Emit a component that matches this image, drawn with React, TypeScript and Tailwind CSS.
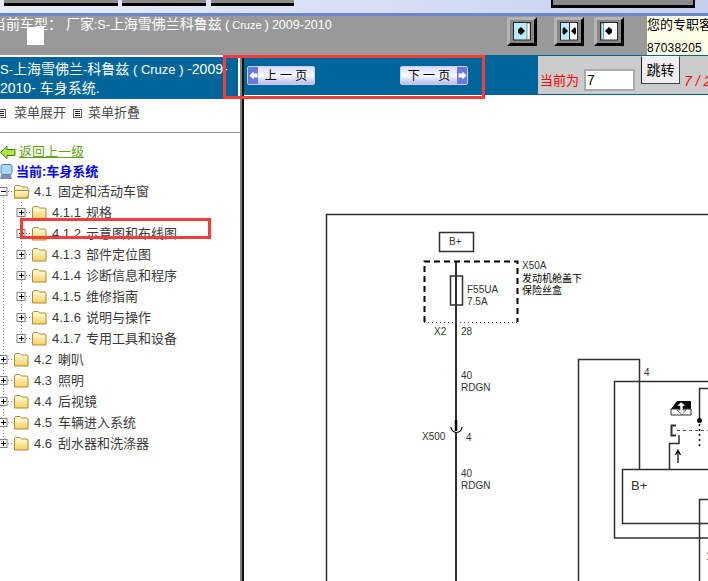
import { useId } from 'react';

const FONT = "font-['Liberation_Sans','Noto_Sans_CJK_SC',sans-serif]";

const childRows = [
  { num: '4.1.1', label: '规格' },
  { num: '4.1.2', label: '示意图和布线图' },
  { num: '4.1.3', label: '部件定位图' },
  { num: '4.1.4', label: '诊断信息和程序' },
  { num: '4.1.5', label: '维修指南' },
  { num: '4.1.6', label: '说明与操作' },
  { num: '4.1.7', label: '专用工具和设备' },
];

const topRows = [
  { num: '4.2', label: '喇叭' },
  { num: '4.3', label: '照明' },
  { num: '4.4', label: '后视镜' },
  { num: '4.5', label: '车辆进入系统' },
  { num: '4.6', label: '刮水器和洗涤器' },
];

function Folder({ x, open }: { x: number; open?: boolean }) {
  const id = useId();
  return (
    <g transform={`translate(${x} 0)`}>
      <defs>
        <linearGradient id={id} x1="0" y1="0" x2="0" y2="1">
          <stop offset="0" stopColor="#fffde0" />
          <stop offset="1" stopColor="#f8d060" />
        </linearGradient>
      </defs>
      <path d="M0.5 6 L1.5 4.5 H6 L7.5 6 H13 L14 7 V17 H0.5 Z" fill={`url(#${id})`} stroke="#b08a35" strokeWidth="1" />
      {open ? (
        <path d="M0.5 9.5 H10 L15 9.5 L13.5 17 H0.5 Z" fill={`url(#${id})`} stroke="#b08a35" strokeWidth="1" />
      ) : (
        <path d="M1.5 8.5 H13" stroke="#fff6c0" strokeWidth="1" />
      )}
    </g>
  );
}

function Expander({ x, minus }: { x: number; minus?: boolean }) {
  return (
    <g>
      <rect x={x} y="6.5" width="8" height="8" fill="#fff" stroke="#808080" />
      <path d={`M${x + 2} 10.5 H${x + 7}`} stroke="#000" />
      {!minus && <path d={`M${x + 4.5} 8 V13`} stroke="#000" />}
    </g>
  );
}

const Dots = ({ d }: { d: string }) => (
  <path d={d} stroke="#888" strokeWidth="1" strokeDasharray="1 2" fill="none" />
);

function TreeRow({ num, label, child, open }: { num: string; label: string; child?: boolean; open?: boolean }) {
  return (
    <div className="flex h-[21px] items-center text-[13px] text-[#3a3a3a]">
      {child ? (
        <svg width="52" height="21" className="shrink-0">
          <Dots d="M3.5 0 V21" />
          <Dots d={num === '4.1.7' ? 'M21.5 0 V10' : 'M21.5 0 V21'} />
          <Dots d="M26 10.5 H32" />
          <Expander x={17} />
          <Folder x={32} />
        </svg>
      ) : (
        <svg width="34" height="21" className="shrink-0">
          <Dots d={num === '4.6' ? 'M3.5 0 V10' : open ? 'M3.5 10 V21' : 'M3.5 0 V21'} />
          <Dots d="M8 10.5 H14" />
          <Expander x={-1} minus={open} />
          <Folder x={14} open={open} />
        </svg>
      )}
      <span className="whitespace-pre">{num}</span>
      <span className={child ? 'ml-[5px]' : 'ml-[6px]'}>{label}</span>
    </div>
  );
}

function PageButton({ dir, label }: { dir: 'prev' | 'next'; label: string }) {
  const arrow = (
    <span className="flex h-full w-[10px] items-center justify-center bg-[#6a78dc]">
      <svg width="9" height="9" viewBox="0 0 9 9">
        <path d={dir === 'prev' ? 'M0.5 4.5 L4.5 0.5 V2.5 H8.5 V6.5 H4.5 V8.5 Z' : 'M8.5 4.5 L4.5 0.5 V2.5 H0.5 V6.5 H4.5 V8.5 Z'} fill="#fff" />
      </svg>
    </span>
  );
  return (
    <div className="flex h-[19px] w-[68px] items-center overflow-hidden rounded-[2px] border border-[#c8d0f4] bg-gradient-to-b from-[#d8dcfa] via-[#fafaff] to-[#b6bcee] text-[12px] text-black">
      {dir === 'prev' && arrow}
      <span className="flex-1 text-center whitespace-pre">{label}</span>
      {dir === 'next' && arrow}
    </div>
  );
}

function SplitIcon({ kind }: { kind: 'left' | 'both' | 'right' }) {
  const fill = kind === 'left' ? '#b6ecfb' : '#fff';
  return (
    <svg width="30" height="29" viewBox="0 0 30 29" className="shrink-0">
      <rect width="30" height="29" fill="#000" />
      <path d="M0 0 H30 L27 3 H3 V26 L0 29 Z" fill="#b4b4b4" />
      <rect x="3" y="3" width="24" height="23" fill="#878787" />
      <rect x="6.5" y="5.5" width="17" height="17.5" fill={fill} stroke="#2a2a2a" />
      {kind === 'both' && <rect x="7" y="6" width="8" height="16.5" fill="#b6ecfb" />}
      {kind === 'left' && <rect x="20" y="6" width="3" height="16.5" fill="#fff" stroke="#2a2a2a" strokeWidth="0.5" />}
      {kind === 'right' && <rect x="7" y="6" width="2.5" height="16.5" fill="#b6ecfb" stroke="#2a2a2a" strokeWidth="0.5" />}
      {kind === 'both' && <path d="M15.5 5.5 V23" stroke="#2a2a2a" />}
      {kind === 'left' && <path d="M18 14 L14 10 L11 12.5 V15.5 L14 18 Z" fill="#000" />}
      {kind === 'both' && <path d="M14 14 L10 10 L8.5 12 V16 L10 18 Z" fill="#000" />}
      {kind === 'both' && <path d="M17 14 L21 10 L22 12 V16 L21 18 Z" fill="#000" />}
      {kind === 'right' && <path d="M11 14 L15 10 L18 12.5 V15.5 L15 18 Z" fill="#000" />}
    </svg>
  );
}

function MenuGlyph() {
  return (
    <svg width="9" height="9" viewBox="0 0 9 9" className="shrink-0">
      <rect x="0.5" y="0.5" width="8" height="8" fill="#fff" stroke="#666" />
      <path d="M2 2.5 H7 M2 4.5 H7 M2 6.5 H7" stroke="#222" />
    </svg>
  );
}

function WiringDiagram() {
  const line = '#2f2f2f';
  const text = 'fill-[#333] text-[10px]';
  return (
    <svg width="464" height="486" viewBox="244 95 464 486" className="block">
      <g fill="none" stroke={line} strokeWidth="1.5">
        <path d="M326.5 581 V214.5 H708" />
        <rect x="439.5" y="232.5" width="34" height="19" />
        <rect x="450.5" y="276" width="12" height="29" />
        <path d="M578.5 581 V359.5 H639.5 V469" strokeWidth="1.5" />
        <path d="M708 381.5 H614.5 V538 H708" />
        <path d="M708 469.5 H622.5 V523.5 H708" />
        <path d="M708 388.5 H699.5 V421" />
        <path d="M708 499.5 H699.5 V581" />
        <path d="M669.5 469 V443.5 H679 V435" />
        <path d="M676 425.5 H671.5 V435.5 H676" strokeWidth="2" />
      </g>
      <path d="M456 261 V420 M456 432 V581" stroke={line} strokeWidth="2" fill="none" />
      <path d="M456 420 V431" stroke="#000" strokeWidth="2.5" />
      <path d="M451 427 A5.5 5.5 0 0 0 462 427" stroke="#000" strokeWidth="1.2" fill="none" />
      <path d="M424.5 322 V261.5 H517.5 V322" stroke="#000" strokeWidth="2" strokeDasharray="6 4" fill="none" />
      <path d="M424 322.5 H518" stroke="#555" strokeWidth="1" strokeDasharray="1 3" fill="none" />
      <path d="M677 430.5 H708" stroke="#555" strokeWidth="1" strokeDasharray="3 3" fill="none" />
      <path d="M699.5 424 V448" stroke="#000" strokeWidth="1.5" strokeDasharray="2 3" fill="none" />
      <circle cx="699.5" cy="420.5" r="2.5" fill="#000" />
      <path d="M678 463 V451 M675.5 455 L678 450 L680.5 455" stroke="#000" strokeWidth="1.2" fill="none" />
      <path d="M671 409 L677 401 H691 V409 Z" fill="#000" />
      <path d="M671 409 H691 V415 H671 Z" fill="#fff" stroke="#333" />
      <path d="M681 402 L677 406 H680 V410 L677 410 L682 415 L686 410 H683 V406 H686 Z" fill="#fff" stroke="#000" strokeWidth="0.5" />
      <g>
        <text x="449" y="245" className={text}>B+</text>
        <text x="467" y="293" className={text}>F55UA</text>
        <text x="467" y="305" className={text}>7.5A</text>
        <text x="522" y="269" className={text}>X50A</text>
        <text x="522" y="282" className="fill-black text-[10px]">发动机舱盖下</text>
        <text x="522" y="294" className="fill-black text-[10px]">保险丝盒</text>
        <text x="434" y="335" className={text}>X2</text>
        <text x="461" y="335" className={text}>28</text>
        <text x="461" y="379" className={text}>40</text>
        <text x="461" y="391" className={text}>RDGN</text>
        <text x="422" y="440" className={text}>X500</text>
        <text x="466" y="441" className={text}>4</text>
        <text x="461" y="477" className={text}>40</text>
        <text x="461" y="489" className={text}>RDGN</text>
        <text x="644" y="376" className={text}>4</text>
        <text x="631" y="490" className="fill-[#333] text-[13px]">B+</text>
        <text x="706" y="560" className={text}>1</text>
      </g>
    </svg>
  );
}

export default function App() {
  return (
    <div className={`relative h-[581px] w-[708px] overflow-hidden bg-white ${FONT}`}>
      {/* cut off toolbar buttons along the top */}
      <div className="flex h-[13px] bg-gradient-to-r from-[#e8ecf8] via-[#d8e0f6] to-[#c4d0f0]">
        <div className="ml-[4px] h-[6px] w-[114px] border-b-[3px] border-black bg-[#8a8a8a]" />
        <div className="ml-[4px] h-[6px] w-[84px] border-b-[3px] border-black bg-[#8a8a8a]" />
        <div className="ml-[5px] h-[6px] w-[83px] border-b-[3px] border-black bg-[#8a8a8a]" />
        <div className="ml-[257px] h-[8px] w-[144px] border-x-[2px] border-b-[3px] border-black bg-[#8a8a8a]" />
      </div>
      <div className="h-[3px] bg-[#6c86cc]" />

      <div className="flex h-[39px] bg-[#999999]">
        <div className="w-[507px] overflow-hidden">
          <div className="-ml-[8px] text-[14px] leading-[16px] whitespace-pre text-white">
            当前车型： 厂家<span className="text-[12.5px]">:S-</span>上海雪佛兰科鲁兹
            <span className="ml-[3px] text-[13px]">(</span>
            <span className="ml-[3px] text-[11px]">Cruze</span>
            <span className="ml-[3px] text-[13px]">)</span>
            <span className="ml-[3px] text-[12.5px]">2009-2010</span>
          </div>
        </div>
        <div className="flex w-[140px] items-start pt-[1px]">
          <SplitIcon kind="left" />
          <div className="ml-[17px]">
            <SplitIcon kind="both" />
          </div>
          <div className="ml-[10px]">
            <SplitIcon kind="right" />
          </div>
        </div>
        <div className="flex flex-1 flex-col justify-between overflow-hidden bg-[#ffffe8] pt-px text-black">
          <div className="text-[13px] leading-[16px] whitespace-nowrap">您的专职客</div>
          <div className="text-[12px] leading-[14px] tracking-[0.2px]">87038205</div>
        </div>
      </div>

      <div className="flex h-[526px]">
        <aside className="w-[240px] shrink-0 overflow-hidden pt-[2px]">
          <div className="h-[42px] w-[238px] bg-[#006699] pt-[3px] text-[14px] leading-[18px] text-white">
            <div className="whitespace-pre">
              <span className="text-[13px]">S-</span>上海雪佛兰<span className="text-[13px]">-</span>科鲁兹<span className="text-[13px]"> ( Cruze ) </span>-2009-
            </div>
            <div className="whitespace-pre">2010- 车身系统.</div>
          </div>
          <div className="flex h-[33px] items-center pb-[5px] text-[13px] text-[#4a4a4a]">
            <div className="-ml-[3px]">
              <MenuGlyph />
            </div>
            <span className="ml-[8px]">菜单展开</span>
            <div className="ml-[7px]">
              <MenuGlyph />
            </div>
            <span className="ml-[6px]">菜单折叠</span>
          </div>
          <div className="h-px bg-[#999]" />
          <div className="pt-[9px]">
            <div className="flex h-[20px] items-center">
              <svg width="16" height="13" viewBox="0 0 16 13" className="shrink-0">
                <path d="M0.5 6.5 L7 0.5 V3.5 H15 V9.5 H7 V12.5 Z" fill="#b8e04a" stroke="#2f8a10" />
              </svg>
              <span className="ml-[3px] text-[13px] text-[#5fa516] underline">返回上一级</span>
            </div>
            <div className="flex h-[19px] items-center">
              <svg width="13" height="16" viewBox="0 0 13 16" className="shrink-0">
                <rect x="1" y="0.5" width="11" height="10" rx="2" fill="#a8d8f8" stroke="#5a80b0" />
                <path d="M1 11 H11 L12 15 H0 Z" fill="#7c90b0" />
              </svg>
              <span className="ml-[3px] text-[13px] font-bold text-[#0000ff]">当前:车身系统</span>
            </div>
            <TreeRow num="4.1" label="固定和活动车窗" open />
            {childRows.map((row) => (
              <TreeRow key={row.num} num={row.num} label={row.label} child />
            ))}
            {topRows.map((row) => (
              <TreeRow key={row.num} num={row.num} label={row.label} />
            ))}
          </div>
        </aside>

        <div className="flex w-[4px] shrink-0">
          <div className="w-[2px] bg-[#808080]" />
          <div className="w-[2px] bg-[#111]" />
        </div>

        <main className="min-w-0 flex-1 overflow-hidden">
          <div className="flex h-[40px] bg-[#006699] pb-px">
            <div className="w-[294px] shrink-0 pl-[3px] pt-[11px]">
              <div className="flex gap-[85px]">
                <PageButton dir="prev" label="上 一 页" />
                <PageButton dir="next" label="下 一 页" />
              </div>
            </div>
            <div className="mt-px flex min-w-0 flex-1 items-start overflow-hidden bg-[#cccccc] text-[14px]">
              <span className="mt-[15px] ml-[2px] shrink-0 text-[13px] leading-[20px] whitespace-nowrap text-[#ff0000]">当前为</span>
              <input
                readOnly
                defaultValue="7"
                className="mt-[13px] ml-[5px] h-[22px] w-[51px] shrink-0 border-2 border-[#aaa] bg-white pl-[1px] text-[14px] text-black"
              />
              <div className="ml-[6px] flex h-[28px] w-[39px] shrink-0 items-center justify-center border border-t-white border-r-[#444] border-b-[#444] border-l-[#222] bg-[#f0f0f0] text-black">
                跳转
              </div>
              <span className="mt-[15px] ml-[4px] shrink-0 leading-[20px] whitespace-pre text-[#ff0000] italic">7 / 2</span>
            </div>
          </div>
          <WiringDiagram />
        </main>
      </div>

      {/* overlays */}
      <div className="absolute top-[27px] left-[27px] h-[18px] w-[17px] bg-white" />
      <div className="absolute top-[55px] left-[223px] h-[44px] w-[262px] border-[3px] border-[#f33c3c]" />
      <div className="absolute top-[218px] left-[20px] h-[21px] w-[191px] border-[3px] border-[#f33c3c]" />
    </div>
  );
}
